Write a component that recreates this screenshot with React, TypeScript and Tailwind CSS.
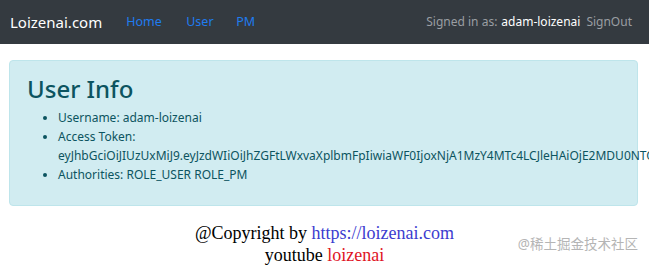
export default function App() {
  const token =
    "eyJhbGciOiJIUzUxMiJ9.eyJzdWIiOiJhZGFtLWxvaXplbmFpIiwiaWF0IjoxNjA1MzY4MTc4LCJleHAiOjE2MDU0NTQ1Nzh9.xH3kR9sQmB2vLp";
  return (
    <div className="relative w-[649px] h-[268px] overflow-hidden bg-white" style={{ fontFamily: '"Noto Sans", "Open Sans", sans-serif' }}>
      <nav className="h-[44px] bg-[#343a40] flex items-center px-[10px]">
        <span className="text-white text-[15px] mr-[24px]">Loizenai.com</span>
        <div className="flex items-center text-[12.5px] text-[#1f7cf0]">
          <span className="w-[60px]">Home</span>
          <span className="w-[50px]">User</span>
          <span>PM</span>
        </div>
        <div className="ml-auto flex items-center text-[12px] pr-[7px]">
          <span className="text-[#9a9ea3]">Signed in as:</span>
          <span className="text-white ml-[4px]">adam-loizenai</span>
          <span className="text-[#9a9ea3] ml-[6px]">SignOut</span>
        </div>
      </nav>
      <div className="mx-[9px] mt-[16px] h-[146px] rounded-[4px] bg-[#d1ecf1] border border-[#bee5eb] text-[#0c5460] pl-[17px] pt-[12px] w-[629px]">
        <h2 className="text-[24px] leading-[32px] font-medium">User Info</h2>
        <ul className="list-disc pl-[31px] mt-[3px] text-[12px] leading-[19px]">
          <li>Username: adam-loizenai</li>
          <li>
            Access Token: <span className="whitespace-nowrap block">{token}</span>
          </li>
          <li>Authorities: ROLE_USER ROLE_PM</li>
        </ul>
      </div>
      <footer className="mt-[16px] text-center text-black text-[18px] leading-[22px]" style={{ fontFamily: '"Liberation Serif", serif' }}>
        <div>
          @Copyright by <span className="text-[#3c3ccf]">https://loizenai.com</span>
        </div>
        <div>
          youtube <span className="text-[#e0151f]">loizenai</span>
        </div>
      </footer>
      <div className="absolute right-[11px] top-[234px] text-[13.5px] text-[#b5b5b5]" style={{ fontFamily: '"Noto Sans", "Noto Sans CJK SC", sans-serif' }}>
        @稀土掘金技术社区
      </div>
    </div>
  );
}
